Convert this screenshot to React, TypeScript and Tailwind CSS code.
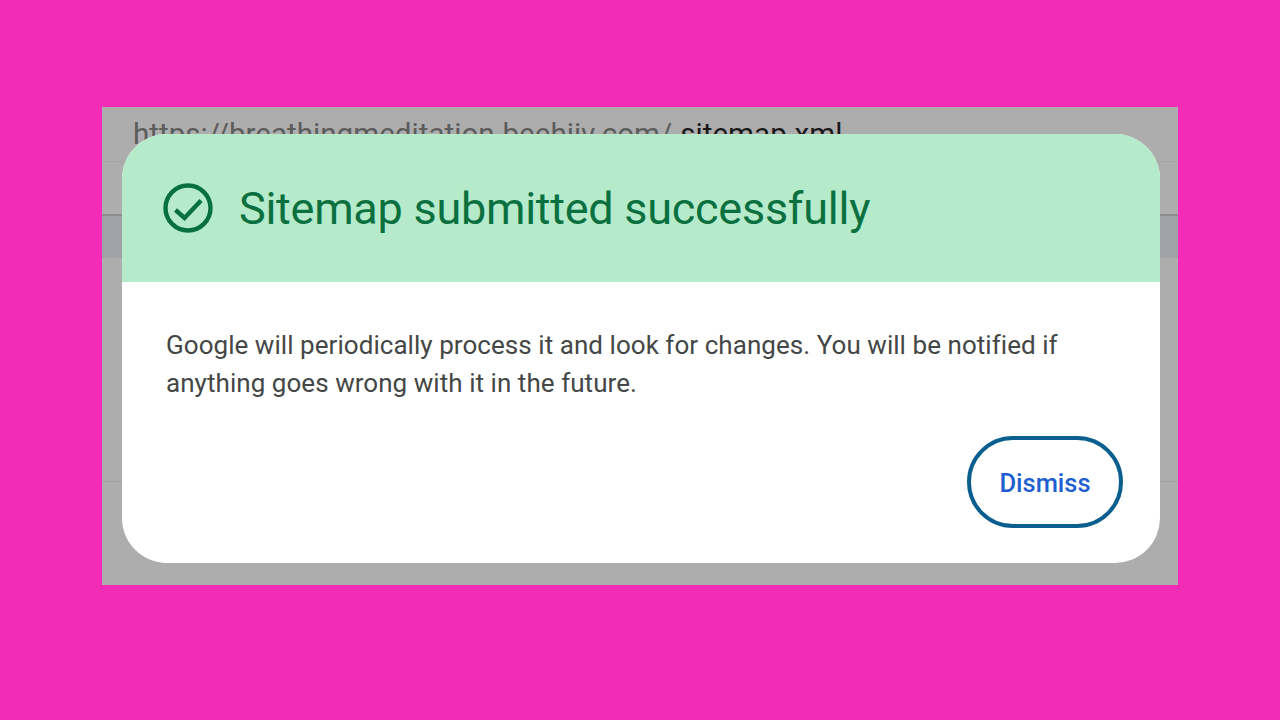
export default function App() {
  return (
    <div className="w-[1280px] h-[720px] bg-[#f22cb7] pt-[107px] pl-[102px] overflow-hidden">
      <div className="relative w-[1076px] h-[478px] bg-[#adadad] overflow-hidden font-['Roboto',sans-serif]">
        <div className="flex h-[55px] pl-[31px] border-b border-[#a3a3a3] text-[29.6px] leading-[54px] whitespace-nowrap">
          <span className="text-[#5c5c5c]">https://breathingmeditation.beehiiv.com/</span>
          <span className="ml-[8px] text-[#1a1a1a]">sitemap.xml</span>
        </div>
        <div className="h-[52px]" />
        <div className="h-[44px] bg-[#a1a2a8] border-t-2 border-[#8f8f8f]" />
        <div className="h-[224px] border-b border-[#a0a0a0]" />
        <div className="absolute left-[20px] top-[27px] w-[1038px] h-[429px] rounded-[45px] overflow-hidden bg-white flex flex-col">
          <div className="h-[148px] bg-[#b5ebcb] flex items-center pl-[41px] gap-[26px]">
            <svg width="50" height="50" viewBox="0 0 50 50" fill="none" stroke="#07703f" className="shrink-0 -mt-[1px]">
              <circle cx="25" cy="25" r="22.5" strokeWidth="4.4" />
              <path d="M12.5 27 L21.5 35 L38 17.5" strokeWidth="4.4" />
            </svg>
            <h1 className="text-[#0b7040] text-[45px] leading-[56px] font-normal tracking-[-0.27px] whitespace-nowrap mt-[1px]">
              Sitemap submitted successfully
            </h1>
          </div>
          <div className="flex-1 flex flex-col pl-[44px] pr-[37px]">
            <p className="mt-[44px] text-[#444746] text-[26px] leading-[38px] tracking-[0.05px] whitespace-nowrap">
              Google will periodically process it and look for changes. You will be notified if
              <br />
              anything goes wrong with it in the future.
            </p>
            <div className="flex justify-end mt-[34px]">
              <button className="w-[156px] h-[92px] rounded-full border-[4px] border-[#0b5f8f] bg-white text-[#1f5fd0] text-[25.5px] font-medium pt-[2px]">
                Dismiss
              </button>
            </div>
          </div>
        </div>
      </div>
    </div>
  );
}
